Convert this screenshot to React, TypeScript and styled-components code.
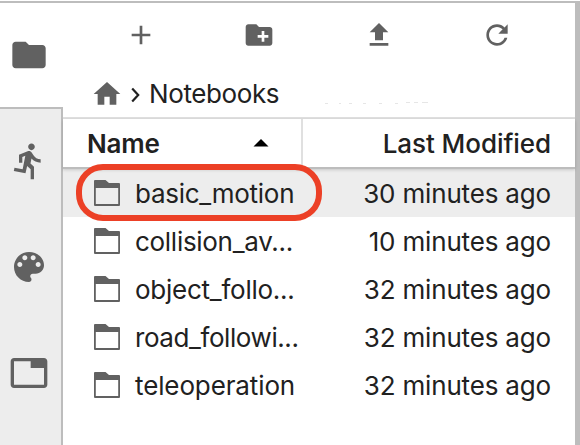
import React from "react";
import styled, { createGlobalStyle } from "styled-components";

const GlobalStyle = createGlobalStyle`
  * { box-sizing: border-box; }
  body { margin: 0; background: #fff; overflow: hidden; }
`;

const Window = styled.div`
  display: flex;
  flex-direction: column;
  width: 580px;
  height: 445px;
  padding-top: 1px;
  background: #fff;
  color: #212121;
  font-family: Inter, "Liberation Sans", sans-serif;
  font-size: 26px;
`;

const Body = styled.div`
  display: flex;
  flex: 1;
  min-height: 0;
  border-top: 2px solid #bdbdbd;
`;

const Sidebar = styled.nav`
  display: flex;
  flex-direction: column;
  width: 63px;
`;

const ActiveTab = styled.div`
  height: 104px;
  padding: 32px 0 0 9px;
`;

const TabList = styled.div`
  display: flex;
  flex: 1;
  flex-direction: column;
  gap: 66px;
  padding: 32px 0 0 9px;
  background: #ededed;
  border-top: 2px solid #bdbdbd;
  border-right: 2px solid #bdbdbd;
`;

const Icon = styled.svg<{ $size: number }>`
  display: block;
  flex: none;
  width: ${(p) => p.$size}px;
  height: ${(p) => p.$size}px;
  fill: #616161;
`;

const Browser = styled.main`
  flex: 1;
  min-width: 0;
  border-right: 5px solid #bdbdbd;
`;

const Toolbar = styled.div`
  display: grid;
  grid-template-columns: 118px 120px 118px 32px;
  height: 64px;
  padding: 16px 0 0 62px;
`;

const Breadcrumbs = styled.div`
  display: flex;
  align-items: center;
  height: 52px;
  padding: 3px 0 0 28px;
  border-bottom: 2px solid #e0e0e0;
`;

const Separator = styled.svg`
  width: 9px;
  height: 16px;
  margin: 3px 0 0 8px;
  fill: none;
  stroke: #212121;
  stroke-width: 2.2;
`;

const Crumb = styled.span`
  margin-left: 9px;
  line-height: 32px;
  letter-spacing: -0.4px;
`;

const Remnant = styled.svg`
  width: 106px;
  height: 4px;
  margin: 19px 0 0 45px;
  stroke: #e6e6e6;
`;

const Header = styled.div`
  position: relative;
  z-index: 1;
  display: grid;
  grid-template-columns: 240px 1fr;
  height: 50px;
  border-bottom: 2px solid #bdbdbd;
  box-shadow: 0 1px 3px rgba(0, 0, 0, 0.16);
`;

const NameHeading = styled.div`
  display: flex;
  align-items: center;
  justify-content: space-between;
  padding: 0 32px 0 24px;
  border-right: 2px solid #e0e0e0;
  font-weight: 600;
  letter-spacing: -0.2px;
`;

const Caret = styled.svg`
  width: 16px;
  height: 8px;
  margin-bottom: 2px;
`;

const ModifiedHeading = styled.div`
  padding-right: 24px;
  font-weight: 500;
  line-height: 49px;
  text-align: right;
  letter-spacing: -0.06px;
`;

const Row = styled.div<{ $selected: boolean }>`
  display: grid;
  grid-template-columns: 26px 167px 1fr;
  column-gap: 15px;
  align-items: center;
  height: 48px;
  padding: 0 24px 0 31px;
  background: ${(p) => (p.$selected ? "#ededed" : "#fff")};
`;

const FileName = styled.span<{ $tracking: number }>`
  padding-top: 2px;
  line-height: 46px;
  white-space: nowrap;
  letter-spacing: ${(p) => p.$tracking}px;
`;

const Modified = styled.span`
  padding-top: 2px;
  line-height: 46px;
  text-align: right;
  white-space: nowrap;
  letter-spacing: -0.17px;
`;

const Highlight = styled.div`
  position: absolute;
  left: 76px;
  top: 164px;
  z-index: 2;
  width: 246px;
  height: 57px;
  border: 6px solid #ec4026;
  border-radius: 27px;
`;

const paths = {
  folder: "M10 4H4c-1.1 0-1.99.9-1.99 2L2 18c0 1.1.9 2 2 2h16c1.1 0 2-.9 2-2V8c0-1.1-.9-2-2-2h-8l-2-2z",
  run: "M13.49 5.48c1.1 0 2-.9 2-2s-.9-2-2-2-2 .9-2 2 .9 2 2 2zm-3.6 13.9l1-4.4 2.1 2v6h2v-7.5l-2.1-2 .6-3c1.3 1.5 3.3 2.5 5.5 2.5v-2c-1.9 0-3.5-1-4.3-2.4l-1-1.6c-.4-.6-1-1-1.7-1-.3 0-.5.1-.8.1l-5.2 2.2v4.7h2v-3.4l1.8-.7-1.6 8.1-4.9-1-.4 2 7 1.4z",
  palette: "M12 3c-4.97 0-9 4.03-9 9s4.03 9 9 9c.83 0 1.5-.67 1.5-1.5 0-.39-.15-.74-.39-1.01-.23-.26-.38-.61-.38-.99 0-.83.67-1.5 1.5-1.5H16c2.76 0 5-2.24 5-5 0-4.42-4.03-8-9-8zm-5.5 9c-.83 0-1.5-.67-1.5-1.5S5.67 9 6.5 9 8 9.67 8 10.5 7.33 12 6.5 12zm3-4C8.67 8 8 7.33 8 6.5S8.67 5 9.5 5s1.5.67 1.5 1.5S10.33 8 9.5 8zm5 0c-.83 0-1.5-.67-1.5-1.5S13.67 5 14.5 5s1.5.67 1.5 1.5S15.33 8 14.5 8zm3 4c-.83 0-1.5-.67-1.5-1.5S16.67 9 17.5 9s1.5.67 1.5 1.5-.67 1.5-1.5 1.5z",
  tab: "M21 3H3c-1.1 0-2 .9-2 2v14c0 1.1.9 2 2 2h18c1.1 0 2-.9 2-2V5c0-1.1-.9-2-2-2zm0 16H3V5h10v4h8v10z",
  add: "M19 13h-6v6h-2v-6H5v-2h6V5h2v6h6v2z",
  newFolder: "M20 6h-8l-2-2H4c-1.11 0-1.99.89-1.99 2L2 18c0 1.11.89 2 2 2h16c1.11 0 2-.89 2-2V8c0-1.11-.89-2-2-2zm-1 8h-3v3h-2v-3h-3v-2h3V9h2v3h3v2z",
  upload: "M9 16h6v-6h4l-7-7-7 7h4zm-4 2h14v2H5z",
  refresh: "M17.65 6.35C16.2 4.9 14.21 4 12 4c-4.42 0-7.99 3.58-7.99 8s3.57 8 7.99 8c3.73 0 6.84-2.55 7.73-6h-2.08c-.82 2.33-3.04 4-5.65 4-3.31 0-6-2.69-6-6s2.69-6 6-6c1.66 0 3.14.69 4.22 1.78L13 11h7V4l-2.35 2.35z",
  home: "M10 20v-6h4v6h5v-8h3L12 3 2 12h3v8z",
};

type GlyphProps = { name: keyof typeof paths; size: number };

function Glyph({ name, size }: GlyphProps) {
  return (
    <Icon viewBox="0 0 24 24" $size={size}>
      <path d={paths[name]} />
    </Icon>
  );
}

const files = [
  { name: "basic_motion", modified: "30 minutes ago", tracking: -0.27 },
  { name: "collision_av...", modified: "10 minutes ago", tracking: -0.29 },
  { name: "object_follo...", modified: "32 minutes ago", tracking: -0.25 },
  { name: "road_followi...", modified: "32 minutes ago", tracking: -0.42 },
  { name: "teleoperation", modified: "32 minutes ago", tracking: -0.12 },
];

export default function App() {
  return (
    <Window>
      <GlobalStyle />
      <Body>
        <Sidebar>
          <ActiveTab>
            <Glyph name="folder" size={40} />
          </ActiveTab>
          <TabList>
            <Glyph name="run" size={40} />
            <Glyph name="palette" size={40} />
            <Glyph name="tab" size={40} />
          </TabList>
        </Sidebar>
        <Browser>
          <Toolbar>
            <Glyph name="add" size={32} />
            <Glyph name="newFolder" size={32} />
            <Glyph name="upload" size={32} />
            <Glyph name="refresh" size={32} />
          </Toolbar>
          <Breadcrumbs>
            <Glyph name="home" size={32} />
            <Separator viewBox="0 0 9 16">
              <path d="M1.2 1.5l6 6.5-6 6.5" />
            </Separator>
            <Crumb>Notebooks</Crumb>
            <Remnant viewBox="0 0 106 4">
              <path d="M1 2.5h3M15 2.5h2M25 2.5h3M39 2.5h3M55 2.5h3M71 2.5h3M82 1.5h4M90 1.5h4M98 1.5h6" />
            </Remnant>
          </Breadcrumbs>
          <Header>
            <NameHeading>
              Name
              <Caret viewBox="0 0 16 8">
                <path d="M0.5 7.5L8 0l7.5 7.5z" />
              </Caret>
            </NameHeading>
            <ModifiedHeading>Last Modified</ModifiedHeading>
          </Header>
          {files.map((file, index) => (
            <Row key={file.name} $selected={index === 0}>
              <Icon viewBox="0 0 26 26" $size={26}>
                <path
                  fillRule="evenodd"
                  d="M1 0h10.5l3.5 3h10a1 1 0 0 1 1 1v21a1 1 0 0 1-1 1H1a1 1 0 0 1-1-1V1a1 1 0 0 1 1-1zM1.8 8v16h22.4V8z"
                />
              </Icon>
              <FileName $tracking={file.tracking}>{file.name}</FileName>
              <Modified>{file.modified}</Modified>
            </Row>
          ))}
        </Browser>
      </Body>
      <Highlight />
    </Window>
  );
}
